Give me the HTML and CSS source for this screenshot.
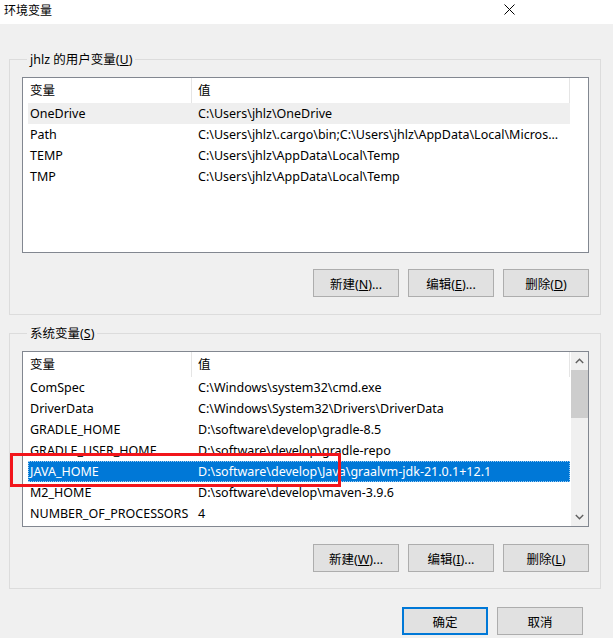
FILE: index.html
```html
<!DOCTYPE html>
<html lang="zh-CN">
<head>
<meta charset="utf-8">
<title>环境变量</title>
<link rel="stylesheet" href="styles.css">
</head>
<body>
<div class="titlebar">
  <span class="title">环境变量</span>
  <svg class="close" width="11" height="11" viewBox="0 0 11 11"><path d="M0.5 0.5 L10.5 10.5 M10.5 0.5 L0.5 10.5" stroke="#000" stroke-width="1" fill="none"/></svg>
</div>
<div class="body">
  <div class="group group-user">
    <div class="legend">jhlz 的用户变量(<u>U</u>)</div>
    <div class="list">
      <div class="main">
        <div class="head"><div class="hc hc1">变量</div><div class="hc hc2">值</div></div>
        <div class="row soft"><div class="c1">OneDrive</div><div class="c2">C:\Users\jhlz\OneDrive</div></div>
        <div class="row"><div class="c1">Path</div><div class="c2">C:\Users\jhlz\.cargo\bin;C:\Users\jhlz\AppData\Local\Micros...</div></div>
        <div class="row"><div class="c1">TEMP</div><div class="c2">C:\Users\jhlz\AppData\Local\Temp</div></div>
        <div class="row"><div class="c1">TMP</div><div class="c2">C:\Users\jhlz\AppData\Local\Temp</div></div>
      </div>
    </div>
    <div class="btns">
      <button class="btn">新建(<u>N</u>)...</button>
      <button class="btn">编辑(<u>E</u>)...</button>
      <button class="btn">删除(<u>D</u>)</button>
    </div>
  </div>

  <div class="group group-sys">
    <div class="legend">系统变量(<u>S</u>)</div>
    <div class="list list-sys">
      <div class="main">
        <div class="head"><div class="hc hc1">变量</div><div class="hc hc2">值</div></div>
        <div class="row"><div class="c1">ComSpec</div><div class="c2">C:\Windows\system32\cmd.exe</div></div>
        <div class="row"><div class="c1">DriverData</div><div class="c2">C:\Windows\System32\Drivers\DriverData</div></div>
        <div class="row"><div class="c1">GRADLE_HOME</div><div class="c2">D:\software\develop\gradle-8.5</div></div>
        <div class="row"><div class="c1">GRADLE_USER_HOME</div><div class="c2">D:\software\develop\gradle-repo</div></div>
        <div class="row selected"><div class="c1">JAVA_HOME</div><div class="c2">D:\software\develop\Java\graalvm-jdk-21.0.1+12.1</div></div>
        <div class="row"><div class="c1">M2_HOME</div><div class="c2">D:\software\develop\maven-3.9.6</div></div>
        <div class="row"><div class="c1">NUMBER_OF_PROCESSORS</div><div class="c2">4</div></div>
      </div>
      <div class="scrollbar">
        <div class="sb-btn"><svg width="9" height="6" viewBox="0 0 9 6"><path d="M0.8 5 L4.5 1.3 L8.2 5" stroke="#606060" stroke-width="1.4" fill="none"/></svg></div>
        <div class="sb-thumb"></div>
        <div class="sb-track"></div>
        <div class="sb-btn"><svg width="9" height="6" viewBox="0 0 9 6"><path d="M0.8 1 L4.5 4.7 L8.2 1" stroke="#606060" stroke-width="1.4" fill="none"/></svg></div>
      </div>
      <div class="mark"></div>
    </div>
    <div class="btns btns-sys">
      <button class="btn">新建(<u>W</u>)...</button>
      <button class="btn">编辑(<u>I</u>)...</button>
      <button class="btn">删除(<u>L</u>)</button>
    </div>
  </div>

  <div class="dlg-btns">
    <button class="btn btn-default">确定</button>
    <button class="btn">取消</button>
  </div>
</div>
</body>
</html>
```

FILE: styles.css
```css
html, body {
  margin: 0;
  padding: 0;
}
body {
  width: 613px;
  height: 638px;
  overflow: hidden;
  background: #f0f0f0;
  font-family: "Noto Sans", "Noto Sans CJK SC", sans-serif;
  font-size: 12.5px;
  color: #000;
}
.titlebar {
  height: 24px;
  background: #fff;
  display: flex;
  align-items: flex-start;
}
.title {
  padding-left: 4px;
  line-height: 20px;
  font-family: "Noto Sans CJK SC", sans-serif;
  font-size: 12px;
}
.close {
  margin-left: auto;
  margin-top: 4px;
  margin-right: 98px;
}
.body {
  padding: 35px 12px 0 9px;
}
.group {
  border: 1px solid #dcdcdc;
}
.group-user {
  padding: 0 11px 17px 12px;
}
.group-sys {
  margin-top: 18px;
  padding: 0 11px 16px 12px;
}
.legend {
  width: fit-content;
  margin-top: -8px;
  margin-left: 5px;
  padding: 0 3px;
  height: 16px;
  line-height: 16px;
  background: #f0f0f0;
}
.list {
  position: relative;
  margin-top: 9px;
  height: 174px;
  border: 1px solid #828790;
  background: #fff;
  display: flex;
}
.main {
  width: 548px;
  overflow: hidden;
}
.head {
  height: 25px;
  display: flex;
  line-height: 25px;
}
.hc {
  box-sizing: border-box;
  border-right: 1px solid #e5e5e5;
  white-space: nowrap;
}
.hc1 {
  width: 169px;
  padding-left: 7px;
}
.hc2 {
  width: 378px;
  padding-left: 6px;
}
.row {
  margin-left: 5px;
  width: 542px;
  height: 21px;
  line-height: 21px;
  display: flex;
  white-space: nowrap;
  box-sizing: border-box;
}
.row.soft {
  background: #efefef;
}
.row.selected {
  background: #0078d7;
  color: #fff;
  outline: 1px dotted #9ccbf2;
  outline-offset: -1px;
}
.c1 {
  width: 168px;
  padding-left: 2px;
  box-sizing: border-box;
  overflow: hidden;
}
.c2 {
  flex: 1;
  padding-left: 2px;
  overflow: hidden;
}
.scrollbar {
  margin-left: auto;
  width: 17px;
  background: #f0f0f0;
  display: flex;
  flex-direction: column;
}
.sb-btn {
  height: 18px;
  display: flex;
  align-items: center;
  justify-content: center;
}
.sb-thumb {
  height: 48px;
  background: #cdcdcd;
}
.sb-track {
  flex: 1;
}
.mark {
  position: absolute;
  left: -13px;
  top: 101px;
  width: 331px;
  height: 34px;
  border: 3px solid #f2151b;
  box-sizing: border-box;
}
.btns {
  display: flex;
  justify-content: flex-end;
  gap: 9px;
  margin-top: 16px;
}
.btns-sys {
  margin-top: 17px;
}
.btn {
  width: 86px;
  height: 28px;
  box-sizing: border-box;
  border: 1px solid #adadad;
  background: #e1e1e1;
  font-family: "Noto Sans", "Noto Sans CJK SC", sans-serif;
  font-size: 12.5px;
  color: #000;
  padding: 0;
  margin: 0;
}
.btn-default {
  border: 2px solid #0078d7;
}
.dlg-btns {
  display: flex;
  justify-content: flex-end;
  gap: 9px;
  margin-top: 18px;
  margin-right: 18px;
}
```
